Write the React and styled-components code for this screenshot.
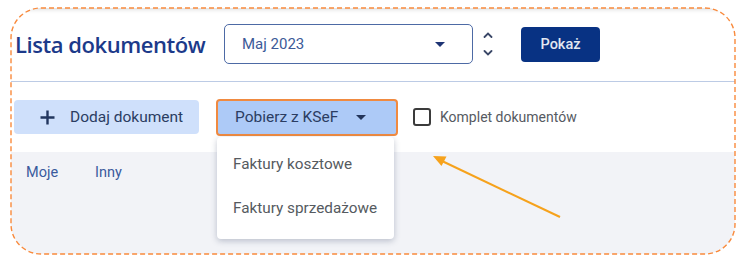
import React from 'react';
import styled, { createGlobalStyle } from 'styled-components';

const GlobalStyle = createGlobalStyle`
  html, body {
    margin: 0;
    padding: 0;
    background: #ffffff;
    font-family: Roboto, "Liberation Sans", sans-serif;
  }
`;

const Page = styled.div`
  position: relative;
  width: 745px;
  height: 271px;
  overflow: hidden;
`;

const Frame = styled.div`
  position: relative;
  margin: 8px 0 0 11px;
  width: 724px;
  height: 246px;
  border-radius: 30px;
  overflow: hidden;
  background: #f2f3f7;
`;

const Header = styled.div`
  display: flex;
  align-items: flex-start;
  height: 74px;
  box-sizing: border-box;
  padding: 16px 0 0 4px;
  background: #ffffff;
  border-bottom: 1px solid #bccbe5;
  box-shadow: inset 0 4px 5px -3px rgba(0, 0, 0, 0.18);
`;

const Title = styled.h1`
  margin: 0;
  width: 209px;
  flex-shrink: 0;
  font-family: "Open Sans", sans-serif;
  font-weight: 550;
  font-size: 22px;
  line-height: 40px;
  letter-spacing: -0.45px;
  color: #1c3a8a;
  white-space: nowrap;
`;

const Select = styled.div`
  display: flex;
  align-items: center;
  justify-content: space-between;
  box-sizing: border-box;
  width: 249px;
  height: 40px;
  padding: 0 27px 0 17px;
  border: 1.5px solid #4d6aa5;
  border-radius: 5px;
  font-size: 15px;
  color: #3c5a98;
`;

const Spinner = styled.div`
  display: flex;
  flex-direction: column;
  justify-content: space-between;
  height: 24px;
  margin: 8px 0 0 10px;
`;

const Primary = styled.button`
  margin: 3px 0 0 28px;
  width: 79px;
  height: 35px;
  border: none;
  border-radius: 4px;
  background: #083283;
  color: #e2e7f1;
  font-family: Roboto, sans-serif;
  font-weight: 500;
  font-size: 14.5px;
`;

const Toolbar = styled.div`
  display: flex;
  align-items: center;
  height: 70px;
  padding-left: 3px;
  background: #ffffff;
`;

const Action = styled.button`
  display: flex;
  align-items: center;
  box-sizing: border-box;
  height: ${p => (p.$focused ? 37 : 34)}px;
  width: ${p => (p.$focused ? 182 : 185)}px;
  padding: 0 ${p => (p.$focused ? 30 : 0)}px 0 ${p => (p.$focused ? 17 : 26)}px;
  gap: ${p => (p.$focused ? 0 : 15)}px;
  justify-content: ${p => (p.$focused ? 'space-between' : 'flex-start')};
  border: ${p => (p.$focused ? '2px solid #f08a40' : 'none')};
  border-radius: 4px;
  background: ${p => (p.$focused ? '#adcaf7' : '#cfe0fb')};
  color: #2b3d62;
  font-family: Roboto, sans-serif;
  font-size: 15.5px;
  cursor: pointer;
`;

const MenuAnchor = styled.div`
  position: relative;
  margin-left: 17px;
`;

const Menu = styled.ul`
  position: absolute;
  top: calc(100% + 1px);
  left: 1px;
  width: 177px;
  margin: 0;
  padding: 5px 0 9px;
  list-style: none;
  background: #ffffff;
  border-radius: 4px;
  box-shadow: 0 2px 6px rgba(40, 55, 90, 0.28);
  z-index: 2;
`;

const MenuItem = styled.li`
  height: 44px;
  line-height: 44px;
  padding-left: 16px;
  font-size: 15.3px;
  color: #555a60;
`;

const Check = styled.label`
  display: flex;
  align-items: center;
  gap: 9px;
  margin-left: 15px;
  font-size: 14px;
  color: #565a62;
`;

const Box = styled.span`
  box-sizing: border-box;
  width: 18px;
  height: 18px;
  border: 2px solid #3b3b3b;
  border-radius: 3px;
`;

const Tabs = styled.div`
  display: flex;
  gap: 37px;
  padding: 12px 0 0 15px;
`;

const Tab = styled.span`
  font-size: 14.5px;
  line-height: 18px;
  color: #3a5a9d;
`;

const Overlay = styled.svg`
  position: absolute;
  inset: 0;
  pointer-events: none;
`;

const Caret = ({ color = '#1e3474' }) => (
  <svg width="10" height="5" viewBox="0 0 10 5">
    <polygon points="0,0 10,0 5,5" fill={color} />
  </svg>
);

const Chevron = ({ up }) => (
  <svg width="10" height="6" viewBox="0 0 10 6">
    <polyline
      points={up ? '1.5,5 5,1.5 8.5,5' : '1.5,1 5,4.5 8.5,1'}
      fill="none"
      stroke="#3b4868"
      strokeWidth="1.8"
      strokeLinecap="round"
    />
  </svg>
);

const Plus = () => (
  <svg width="15" height="15" viewBox="0 0 15 15">
    <path d="M7.5 0.5v14M0.5 7.5h14" stroke="#22365e" strokeWidth="2.4" />
  </svg>
);

export default function App() {
  return (
    <Page>
      <GlobalStyle />
      <Frame>
        <Header>
          <Title>Lista dokumentów</Title>
          <Select>
            <span>Maj 2023</span>
            <Caret />
          </Select>
          <Spinner>
            <Chevron up />
            <Chevron />
          </Spinner>
          <Primary>Pokaż</Primary>
        </Header>
        <Toolbar>
          <Action>
            <Plus />
            Dodaj dokument
          </Action>
          <MenuAnchor>
            <Action $focused>
              Pobierz z KSeF
              <Caret color="#22345a" />
            </Action>
            <Menu>
              <MenuItem>Faktury kosztowe</MenuItem>
              <MenuItem>Faktury sprzedażowe</MenuItem>
            </Menu>
          </MenuAnchor>
          <Check>
            <Box />
            Komplet dokumentów
          </Check>
        </Toolbar>
        <Tabs>
          <Tab>Moje</Tab>
          <Tab>Inny</Tab>
        </Tabs>
      </Frame>
      <Overlay width="745" height="271" viewBox="0 0 745 271">
        <rect
          x="11"
          y="8"
          width="724"
          height="246"
          rx="30"
          fill="none"
          stroke="#f98a3c"
          strokeWidth="1.4"
          strokeDasharray="5 3"
        />
        <line x1="560" y1="217" x2="442" y2="161" stroke="#f6a21c" strokeWidth="2" />
        <polygon points="433,156 446.5,156.5 441.5,166" fill="#f6a21c" />
      </Overlay>
    </Page>
  );
}
